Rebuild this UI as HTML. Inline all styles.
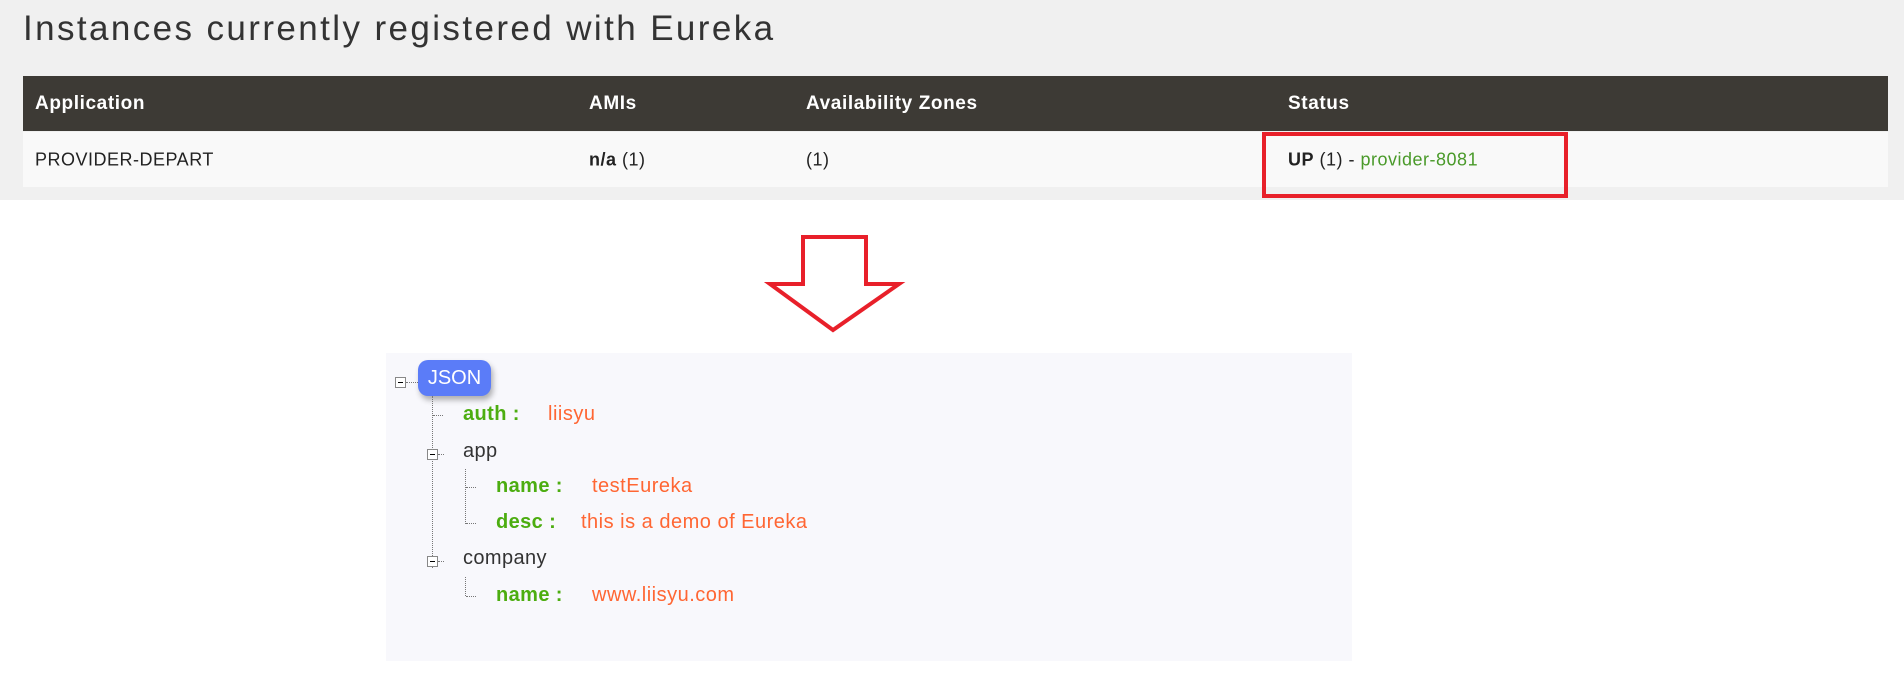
<!DOCTYPE html>
<html><head><meta charset="utf-8"><style>
body{margin:0;width:1904px;height:692px;background:#fff;position:relative;overflow:hidden;font-family:"Liberation Sans","DejaVu Sans",sans-serif}
.a{position:absolute;white-space:nowrap}
.top{position:absolute;left:0;top:0;width:1904px;height:200px;background:#f0f0f0}
h1{position:absolute;left:23px;top:9px;margin:0;font-weight:normal;font-size:35px;color:#333;letter-spacing:2.4px}
.hdr{position:absolute;left:23px;top:76px;width:1865px;height:55px;background:#3d3a35;color:#fff;font-weight:bold;font-size:19px;letter-spacing:0.6px}
.row{position:absolute;left:23px;top:132px;width:1865px;height:55px;background:#f9f9f9;color:#222;font-size:18px;letter-spacing:0.5px}
.hdr span,.row span{position:absolute;top:50%;transform:translateY(-50%)}
.panel{position:absolute;left:386px;top:353px;width:966px;height:308px;background:#f8f8fc}
.k{color:#4cad10;font-weight:bold;font-size:20px;letter-spacing:0.4px}
.v{color:#ff6633;font-size:20px;letter-spacing:0.5px}
.n{color:#333;font-size:20px;letter-spacing:0.4px}
.box{position:absolute;width:9px;height:9px;border:1px solid #888;background:#fff}
.box:after{content:"";position:absolute;left:2px;top:4px;width:5px;height:1px;background:#000}
.vl{position:absolute;border-left:1px dotted #777}
.hl{position:absolute;border-top:1px dotted #777;width:10px}
</style></head><body>
<div class="top"></div>
<h1>Instances currently registered with Eureka</h1>
<div class="hdr"><span style="left:12px">Application</span><span style="left:566px">AMIs</span><span style="left:783px">Availability Zones</span><span style="left:1265px">Status</span></div>
<div class="row"><span style="left:12px">PROVIDER-DEPART</span><span style="left:566px"><b>n/a</b> (1)</span><span style="left:783px">(1)</span><span style="left:1265px"><b>UP</b> (1) - <span style="position:static;transform:none;color:#4a9a2a">provider-8081</span></span></div>
<div class="a" style="left:1262px;top:132px;width:298px;height:58px;border:4px solid #e8202a"></div>
<svg class="a" style="left:760px;top:230px" width="150" height="105"><polygon points="43,7 106,7 106,54 139,54 73,100 10,54 43,54" fill="#fff" stroke="#e8202a" stroke-width="4"/></svg>
<div class="panel"></div>
<div class="box" style="left:395px;top:377px"></div><div class="hl" style="left:406px;top:382px;width:12px"></div>
<div class="a" style="left:418px;top:360px;width:73px;height:36px;background:#5b7cf8;border-radius:10px;box-shadow:2px 4px 6px rgba(0,0,0,.3);color:#fff;font-size:20px;line-height:36px;text-align:center">JSON</div>
<div class="vl" style="left:432px;top:396px;height:172px"></div>
<div class="hl" style="left:433px;top:415px"></div>
<div class="a k" style="left:463px;top:403px">auth :</div><div class="a v" style="left:548px;top:403px">liisyu</div>
<div class="box" style="left:427px;top:449px"></div><div class="hl" style="left:438px;top:454px;width:6px"></div>
<div class="a n" style="left:463px;top:440px">app</div>
<div class="vl" style="left:465px;top:469px;height:55px"></div>
<div class="hl" style="left:466px;top:487px"></div><div class="hl" style="left:466px;top:523px"></div>
<div class="a k" style="left:496px;top:475px">name :</div><div class="a v" style="left:592px;top:475px">testEureka</div>
<div class="a k" style="left:496px;top:511px">desc :</div><div class="a v" style="left:581px;top:511px">this is a demo of Eureka</div>
<div class="box" style="left:427px;top:556px"></div><div class="hl" style="left:438px;top:561px;width:6px"></div>
<div class="a n" style="left:463px;top:547px">company</div>
<div class="vl" style="left:465px;top:577px;height:19px"></div><div class="hl" style="left:466px;top:596px"></div>
<div class="a k" style="left:496px;top:584px">name :</div><div class="a v" style="left:592px;top:584px">www.liisyu.com</div>
</body></html>
